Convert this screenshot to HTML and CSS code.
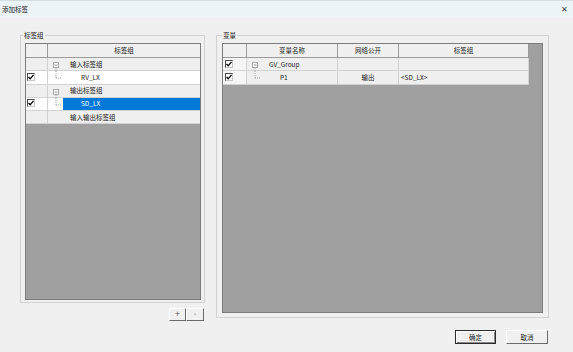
FILE: index.html
```html
<!DOCTYPE html>
<html lang="zh">
<head>
<meta charset="utf-8">
<title>添加标签</title>
<link rel="stylesheet" href="styles.css">
</head>
<body>
<div class="titlebar">
  <span class="title">添加标签</span>
  <span class="close">✕</span>
</div>
<div class="main">
  <div class="left-col">
    <fieldset class="group group-left">
      <legend>标签组</legend>
      <div class="grid grid-left">
        <div class="row head">
          <div class="cell hcell col-check-l"></div>
          <div class="cell hcell col-tree-l">标签组</div>
        </div>
        <div class="row gray">
          <div class="cell col-check-l"></div>
          <div class="cell col-tree-l tree">
            <svg class="twig" width="15" height="13" viewBox="0 0 15 13"><rect x="5.5" y="4.5" width="5" height="5" fill="#fff" stroke="#a8a8a8"/><line x1="6.5" y1="7" x2="9.5" y2="7" stroke="#909090"/><line x1="8" y1="10" x2="8" y2="13" stroke="#a0a0a0" stroke-dasharray="1 1"/></svg>
            <span class="lbl lbl-group">输入标签组</span>
          </div>
        </div>
        <div class="row white">
          <div class="cell col-check-l"><span class="chk"><svg width="6" height="6" viewBox="0 0 6 6"><path d="M0.5 3 L2.2 4.8 L5.5 0.8" fill="none" stroke="#000" stroke-width="1.3"/></svg></span></div>
          <div class="cell col-tree-l tree">
            <svg class="twig" width="15" height="13" viewBox="0 0 15 13"><line x1="8" y1="0" x2="8" y2="7" stroke="#a0a0a0" stroke-dasharray="1 1"/><line x1="8" y1="7" x2="14" y2="7" stroke="#a0a0a0" stroke-dasharray="1 1"/></svg>
            <span class="lbl lbl-child">RV_LX</span>
          </div>
        </div>
        <div class="row gray">
          <div class="cell col-check-l"></div>
          <div class="cell col-tree-l tree">
            <svg class="twig" width="15" height="13" viewBox="0 0 15 13"><rect x="5.5" y="4.5" width="5" height="5" fill="#fff" stroke="#a8a8a8"/><line x1="6.5" y1="7" x2="9.5" y2="7" stroke="#909090"/><line x1="8" y1="10" x2="8" y2="13" stroke="#a0a0a0" stroke-dasharray="1 1"/></svg>
            <span class="lbl lbl-group">输出标签组</span>
          </div>
        </div>
        <div class="row white">
          <div class="cell col-check-l"><span class="chk"><svg width="6" height="6" viewBox="0 0 6 6"><path d="M0.5 3 L2.2 4.8 L5.5 0.8" fill="none" stroke="#000" stroke-width="1.3"/></svg></span></div>
          <div class="cell col-tree-l tree">
            <svg class="twig" width="15" height="13" viewBox="0 0 15 13"><line x1="8" y1="0" x2="8" y2="7" stroke="#a0a0a0" stroke-dasharray="1 1"/><line x1="8" y1="7" x2="14" y2="7" stroke="#a0a0a0" stroke-dasharray="1 1"/></svg>
            <span class="lbl lbl-child selected">SD_LX</span>
          </div>
        </div>
        <div class="row gray">
          <div class="cell col-check-l"></div>
          <div class="cell col-tree-l tree">
            <span class="twig-blank"></span>
            <span class="lbl lbl-group">输入输出标签组</span>
          </div>
        </div>
      </div>
    </fieldset>
    <div class="pm-row">
      <button class="pm pm-plus">+</button>
      <button class="pm pm-minus">-</button>
    </div>
  </div>
  <div class="right-col">
    <fieldset class="group group-right">
      <legend>变量</legend>
      <div class="grid grid-right">
        <div class="row head">
          <div class="cell hcell col-check-r"></div>
          <div class="cell hcell col-name">变量名称</div>
          <div class="cell hcell col-net">网络公开</div>
          <div class="cell hcell col-tag">标签组</div>
        </div>
        <div class="row gray">
          <div class="cell col-check-r light"><span class="chk"><svg width="6" height="6" viewBox="0 0 6 6"><path d="M0.5 3 L2.2 4.8 L5.5 0.8" fill="none" stroke="#000" stroke-width="1.3"/></svg></span></div>
          <div class="cell col-name tree">
            <svg class="twig" width="15" height="13" viewBox="0 0 15 13"><rect x="5.5" y="4.5" width="5" height="5" fill="#fff" stroke="#a8a8a8"/><line x1="6.5" y1="7" x2="9.5" y2="7" stroke="#909090"/><line x1="8" y1="10" x2="8" y2="13" stroke="#a0a0a0" stroke-dasharray="1 1"/></svg>
            <span class="lbl lbl-group">GV_Group</span>
          </div>
          <div class="cell col-net"></div>
          <div class="cell col-tag"></div>
        </div>
        <div class="row gray">
          <div class="cell col-check-r light"><span class="chk"><svg width="6" height="6" viewBox="0 0 6 6"><path d="M0.5 3 L2.2 4.8 L5.5 0.8" fill="none" stroke="#000" stroke-width="1.3"/></svg></span></div>
          <div class="cell col-name tree">
            <svg class="twig" width="15" height="13" viewBox="0 0 15 13"><line x1="8" y1="0" x2="8" y2="7" stroke="#a0a0a0" stroke-dasharray="1 1"/><line x1="8" y1="7" x2="14" y2="7" stroke="#a0a0a0" stroke-dasharray="1 1"/></svg>
            <span class="lbl lbl-child">P1</span>
          </div>
          <div class="cell col-net center">输出</div>
          <div class="cell col-tag text">&lt;SD_LX&gt;</div>
        </div>
      </div>
    </fieldset>
  </div>
</div>
<div class="footer">
  <button class="btn btn-default">确定</button>
  <button class="btn">取消</button>
</div>
</body>
</html>
```

FILE: styles.css
```css
* { box-sizing: border-box; }
html, body { margin: 0; padding: 0; }
body {
  width: 573px;
  height: 352px;
  background: #f0f0f0;
  font-family: "Noto Sans CJK SC", "Noto Sans", sans-serif;
  font-size: 6.5px;
  color: #222;
  overflow: hidden;
}
.titlebar {
  height: 17px;
  background: #edf4f8;
  border-top: 1px solid #d6dde2;
  display: flex;
  align-items: center;
  justify-content: space-between;
  padding: 0 5px 1px 2px;
}
.title { font-size: 6.5px; line-height: 10px; }
.close { font-size: 8px; color: #444; line-height: 10px; }

.main {
  display: flex;
  gap: 11px;
  padding: 13px 24px 0 20px;
}
.left-col { width: 185px; display: flex; flex-direction: column; }
.right-col { width: 333px; }

.group {
  margin: 0;
  min-width: 0;
  border: 1px solid #d2d2d2;
}
.group legend {
  padding: 0 1px;
  line-height: 10px;
  font-size: 6.5px;
}
.group-left { height: 273px; padding: 3px 3px 2px 4px; }
.group-left legend { margin-left: -2px; }
.group-right { height: 288px; padding: 3px 5px 3px 5px; }

.grid {
  border: 1px solid #7d7d7d;
  background: #a0a0a0;
  display: flex;
  flex-direction: column;
}
.grid-left { height: 257px; }
.grid-right { height: 270px; }

.row { display: flex; height: 13.25px; flex: none; }
.row.head { height: 14px; }
.cell {
  height: 100%;
  display: flex;
  align-items: center;
  border-right: 1px solid #d2d2d2;
  border-bottom: 1px solid #d2d2d2;
  white-space: nowrap;
  padding-bottom: 1px;
}
.hcell {
  background: #f0f0f0;
  justify-content: center;
  border-right: 1px solid #9a9a9a;
  border-bottom: 1px solid #9a9a9a;
}
.row.gray .cell { background: #efefef; }
.row.white .cell { background: #fff; }
.row.gray .cell.light { background: #f6f6f6; }

.col-check-l { width: 22px; padding-left: 1px; }
.col-tree-l { flex: 1; border-right: none; }
.col-check-r { width: 24px; padding-left: 2px; }
.col-name { width: 91px; }
.col-net { width: 61px; }
.col-tag { width: 130px; }
.center { justify-content: center; }
.text { padding-left: 2px; }

.tree { align-items: stretch; padding-bottom: 0; }
.twig { flex: none; display: block; }
.twig-blank { width: 15px; flex: none; }
.lbl { display: flex; align-items: center; flex: 1; padding-bottom: 1px; }
.lbl-group { padding-left: 7px; }
.lbl-child { padding-left: 18px; }
.lbl.selected { background: #0078d7; color: #fff; }

.chk {
  width: 8px;
  height: 8px;
  background: #fff;
  border-style: solid;
  border-width: 1px;
  border-color: #4a4a4a #c8c8c8 #c8c8c8 #4a4a4a;
  display: flex;
  align-items: center;
  justify-content: center;
}
.chk svg { display: block; }

.pm-row {
  display: flex;
  justify-content: flex-end;
  margin-top: 5px;
  padding-right: 1px;
}
.pm {
  height: 13px;
  margin: 0;
  padding: 0 0 1px;
  background: #f0f0f0;
  border: 1px solid;
  border-color: #fff #6a6a6a #6a6a6a #fff;
  font-family: "DejaVu Sans", sans-serif;
  font-size: 7px;
  color: #555;
  line-height: 9px;
}
.pm-plus { width: 17px; }
.pm-minus { width: 18px; }

.footer {
  display: flex;
  justify-content: flex-end;
  gap: 10px;
  padding: 9px 25px 0 0;
}
.btn {
  width: 42px;
  height: 14px;
  margin: 0;
  padding: 0 0 1px;
  background: #f0f0f0;
  border: 1px solid;
  border-color: #fff #6a6a6a #6a6a6a #fff;
  font-family: "Noto Sans CJK SC", sans-serif;
  font-size: 6.5px;
  line-height: 10px;
  color: #222;
}
.btn-default {
  width: 41px;
  border-color: #2a2a2a;
  box-shadow: inset 1px 1px 0 #fff, inset -1px -1px 0 #8a8a8a;
}
```
